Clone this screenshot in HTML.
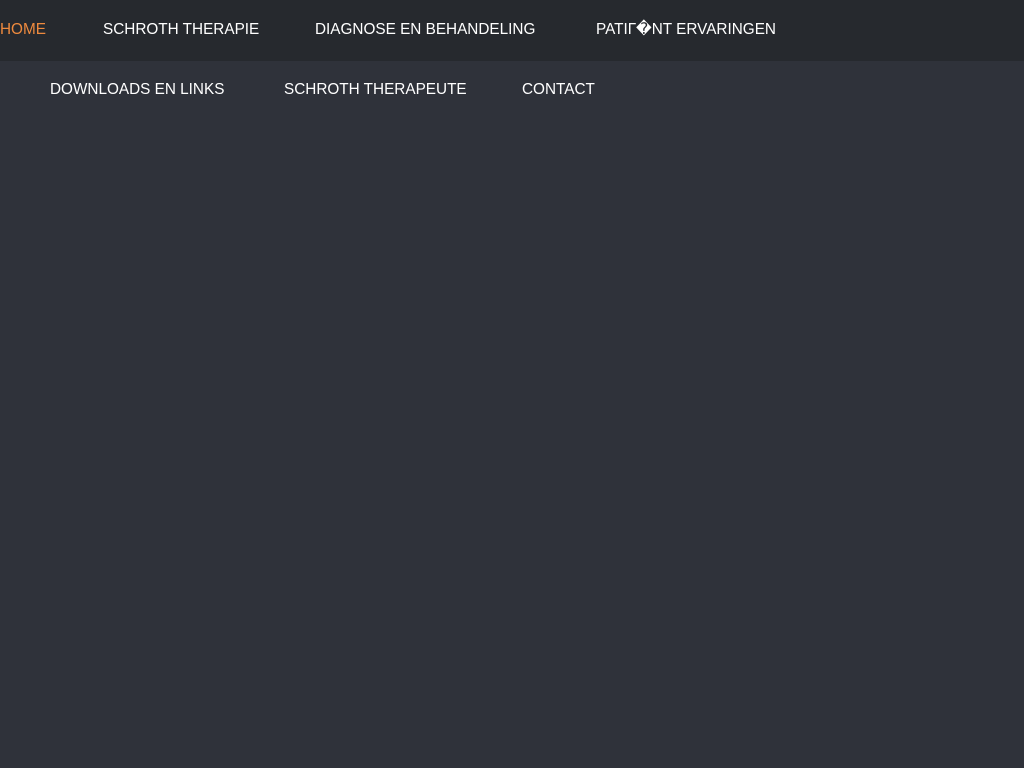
<!DOCTYPE html>
<html><head><meta charset="utf-8"><style>
html,body{margin:0;padding:0;width:1024px;height:768px;background:#2f323a;overflow:hidden;font-family:"Liberation Sans",Arial,sans-serif;}
.top{position:absolute;left:0;top:0;width:1024px;height:61px;background:#26292e;}
span{position:absolute;font-size:16px;color:#fff;white-space:nowrap;line-height:18px;transform:scaleX(0.957);transform-origin:0 0;}
</style></head><body>
<div class="top"></div>
<span style="left:0;top:21px;color:#ee8a3e">HOME</span>
<span style="left:103px;top:21px">SCHROTH THERAPIE</span>
<span style="left:315px;top:21px">DIAGNOSE EN BEHANDELING</span>
<span style="left:596px;top:21px">PATIГ�NT ERVARINGEN</span>
<span style="left:50px;top:81px">DOWNLOADS EN LINKS</span>
<span style="left:284px;top:81px">SCHROTH THERAPEUTE</span>
<span style="left:522px;top:81px">CONTACT</span>
</body></html>
